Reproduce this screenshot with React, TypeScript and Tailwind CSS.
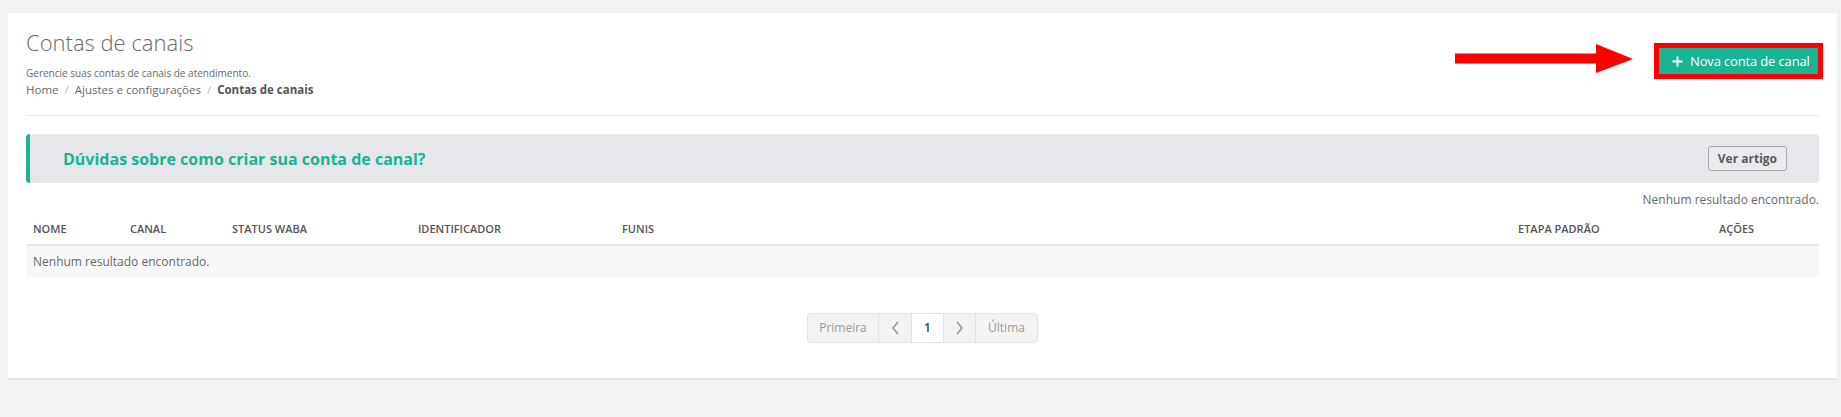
import React from "react";

const cols = [
  { label: "NOME", w: "w-[97px]" },
  { label: "CANAL", w: "w-[102px]" },
  { label: "STATUS WABA", w: "w-[186px]" },
  { label: "IDENTIFICADOR", w: "w-[204px]" },
  { label: "FUNIS", w: "w-[896px]" },
  { label: "ETAPA PADRÃO", w: "w-[201px]" },
  { label: "AÇÕES", w: "flex-1" },
];

export default function App() {
  return (
    <div
      className="min-h-[417px] bg-[#f2f2f2] pl-2 pr-[4px] pt-[13px] pb-[38px]"
      style={{ fontFamily: '"Open Sans", "Noto Sans", sans-serif' }}
    >
      <div className="bg-white border-b-2 border-[#e4e4e4] px-[18px] pt-[14px] pb-[35px]">
        {/* Header */}
        <div className="flex items-start justify-between">
          <div>
            <h1 className="text-[22px] font-light text-[#676a6c] leading-[30px]">
              Contas de canais
            </h1>
            <p className="text-[10px] text-[#676a6c] leading-[14px] mt-[9px]">
              Gerencie suas contas de canais de atendimento.
            </p>
            <div className="text-[11.5px] text-[#676a6c] leading-[17px] flex items-center mt-[1px]">
              <span>Home</span>
              <span className="px-[6px] text-[#bbb]">/</span>
              <span>Ajustes e configurações</span>
              <span className="px-[6px] text-[#bbb]">/</span>
              <span className="font-bold text-[#555]">Contas de canais</span>
            </div>
          </div>
          <div className="relative mt-[16px] mr-[-4px]">
            <svg
              className="absolute left-[-199px] top-[1px]"
              width="178"
              height="30"
              viewBox="0 0 178 30"
            >
              <rect x="0" y="9.5" width="143" height="10" fill="#ff0000" />
              <polygon points="141,0 178,15 141,29" fill="#ff0000" />
            </svg>
            <div className="border-[5px] border-[#ff0000]">
              <button className="w-[159px] flex items-center gap-[7px] bg-[#1ab394] text-white text-[13px] h-[26px] pl-[13px] leading-none whitespace-nowrap overflow-hidden">
                <svg width="11" height="11" viewBox="0 0 11 11" className="shrink-0">
                  <path d="M5.5 0.5v10M0.5 5.5h10" stroke="white" strokeWidth="1.8" />
                </svg>
                <span className="tracking-[-0.15px]">Nova conta de canal</span>
              </button>
            </div>
          </div>
        </div>

        <div className="h-px bg-[#e7eaec] mt-[17px]" />

        {/* Alert */}
        <div className="mt-[18px] h-[49px] bg-[#e6e7ea] border-l-4 border-[#1ab394] rounded-[4px] flex items-center justify-between pl-[33px] pr-[32px]">
          <span className="text-[16px] font-bold text-[#1ab394]">
            Dúvidas sobre como criar sua conta de canal?
          </span>
          <button className="h-[25px] px-[9px] border border-[#a9a9a9] rounded-[3px] text-[12px] font-bold text-[#5a5a5a] leading-none bg-[#e9eaed]">
            Ver artigo
          </button>
        </div>

        <div className="text-right text-[12px] text-[#676a6c] leading-[17px] mt-[8px]">
          Nenhum resultado encontrado.
        </div>

        {/* Table */}
        <div className="mt-[4px]">
          <div className="flex h-[34px] items-center border-b-2 border-[#e7e7e7]">
            {cols.map((c) => (
              <div
                key={c.label}
                className={`${c.w} pl-[7px] text-[11px] font-semibold text-[#555] leading-none`}
              >
                {c.label}
              </div>
            ))}
          </div>
          <div className="h-[31px] bg-[#f8f8f8] flex items-center pl-[7px] text-[12px] text-[#676a6c]">
            Nenhum resultado encontrado.
          </div>
        </div>

        {/* Pagination */}
        <div className="flex justify-center mt-[36px]">
          <div className="flex h-[30px] border border-[#e4e4e4] rounded-[4px] overflow-hidden text-[12px] text-[#999]">
            <div className="w-[71px] flex items-center justify-center bg-[#f3f3f3] border-r border-[#e4e4e4]">
              Primeira
            </div>
            <div className="w-[33px] flex items-center justify-center bg-[#f3f3f3] border-r border-[#e4e4e4]">
              <svg width="9" height="14" viewBox="0 0 9 14">
                <path d="M7 1L2 7l5 6" stroke="#999" strokeWidth="1.6" fill="none" />
              </svg>
            </div>
            <div className="w-[32px] flex items-center justify-center bg-white border-r border-[#e4e4e4] text-[#444] font-semibold">
              1
            </div>
            <div className="w-[32px] flex items-center justify-center bg-[#f3f3f3] border-r border-[#e4e4e4]">
              <svg width="9" height="14" viewBox="0 0 9 14">
                <path d="M2 1l5 6-5 6" stroke="#999" strokeWidth="1.6" fill="none" />
              </svg>
            </div>
            <div className="w-[61px] flex items-center justify-center bg-[#f3f3f3]">
              Última
            </div>
          </div>
        </div>
      </div>
    </div>
  );
}
